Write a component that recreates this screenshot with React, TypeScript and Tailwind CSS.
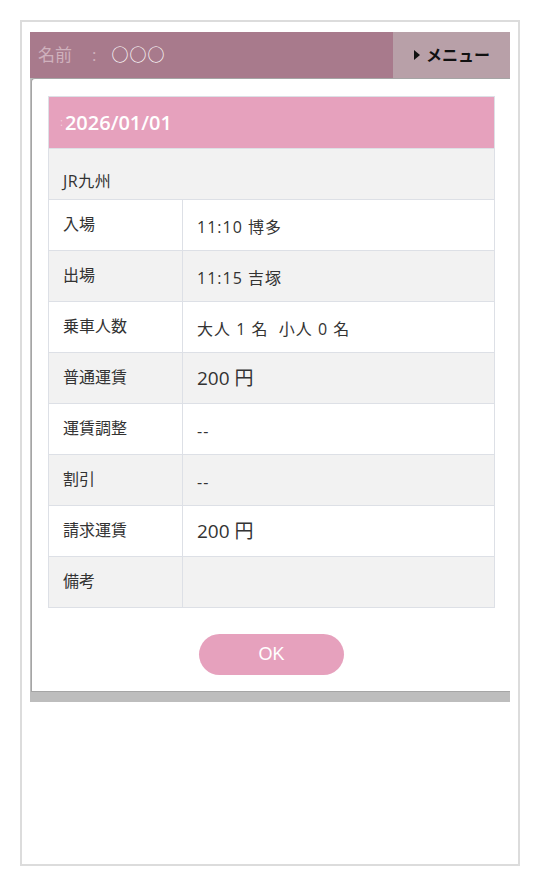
import React from 'react';

const rows = [
  { label: '入場', value: '11:10 博多', big: false },
  { label: '出場', value: '11:15 吉塚', big: false },
  { label: '乗車人数', value: '大人 1 名  小人 0 名', big: false },
  { label: '普通運賃', value: '200 円', big: true },
  { label: '運賃調整', value: '--', big: false },
  { label: '割引', value: '--', big: false },
  { label: '請求運賃', value: '200 円', big: true },
  { label: '備考', value: '', big: false },
];

const App = () => {
  return (
    <div
      className="w-[540px] h-[886px] bg-white pt-[20px] px-[20px]"
      style={{ fontFamily: '"Open Sans", "Noto Sans CJK JP", sans-serif' }}
    >
      <div className="h-[846px] border-2 border-[#dcdcdc] px-[8px] pt-[10px]">
        <div className="overflow-hidden">
          {/* header bar (under overlay) */}
          <div className="flex h-[46px] bg-[#a87a8c]">
            <div className="flex flex-1 items-center pl-[8px] text-[17px]">
              <span className="text-[#cfb1bd]">名前</span>
              <span className="ml-[20px] text-[#cfb1bd]">:</span>
              <span className="ml-[15px] tracking-[1px] text-white">○○○</span>
            </div>
            <div className="flex w-[117px] items-center justify-center bg-[#b8a0a8] text-[16px] font-bold text-[#111]">
              <svg width="8" height="10" viewBox="0 0 8 10" className="mr-[5px]">
                <path d="M1 0 L7 5 L1 10 Z" fill="#111" />
              </svg>
              メニュー
            </div>
          </div>

          {/* backdrop + modal */}
          <div className="bg-[#bdbdbd] pb-[10px]">
            <div className="ml-[1px] w-[490px] rounded-tl-[4px] border-l border-b border-t border-[#a5a5a5] bg-white pt-[17px] pb-[16px] pl-[16px]">
              <div className="w-[447px] border border-[#dde0e6]">
                <div className="flex h-[51px] items-center bg-[#e6a1bd] pl-[11px] text-[20px] font-semibold text-white">
                  <span className="mr-[2px] text-[11px] font-normal text-[#f3d0de]">:</span>
                  2026/01/01
                </div>
                <div className="flex h-[51px] items-end border-t border-[#dde0e6] bg-[#f2f2f2] pb-[6px] pl-[14px] text-[16px] tracking-[0.5px] text-[#333]">
                  JR九州
                </div>
                {rows.map((r, i) => (
                  <div
                    key={r.label}
                    className={`flex h-[51px] border-t border-[#dde0e6] ${i % 2 === 1 ? 'bg-[#f2f2f2]' : 'bg-white'}`}
                  >
                    <div className="flex w-[134px] items-center border-r border-[#dde0e6] pl-[14px] pb-[2px] text-[16px] text-[#333]">
                      {r.label}
                    </div>
                    <div
                      className={`flex flex-1 items-center whitespace-pre pl-[14px] text-[#333] ${r.big ? 'text-[19px]' : 'pt-[3px] text-[16px] tracking-[1px]'}`}
                    >
                      {r.value}
                    </div>
                  </div>
                ))}
              </div>
              <div className="mt-[26px] flex justify-center pr-[16px]">
                <button className="ml-[-10px] h-[41px] w-[145px] rounded-full bg-[#e6a1bd] font-['Liberation_Sans',sans-serif] text-[18px] text-white">
                  OK
                </button>
              </div>
            </div>
          </div>
        </div>
      </div>
    </div>
  );
};

export default App;
